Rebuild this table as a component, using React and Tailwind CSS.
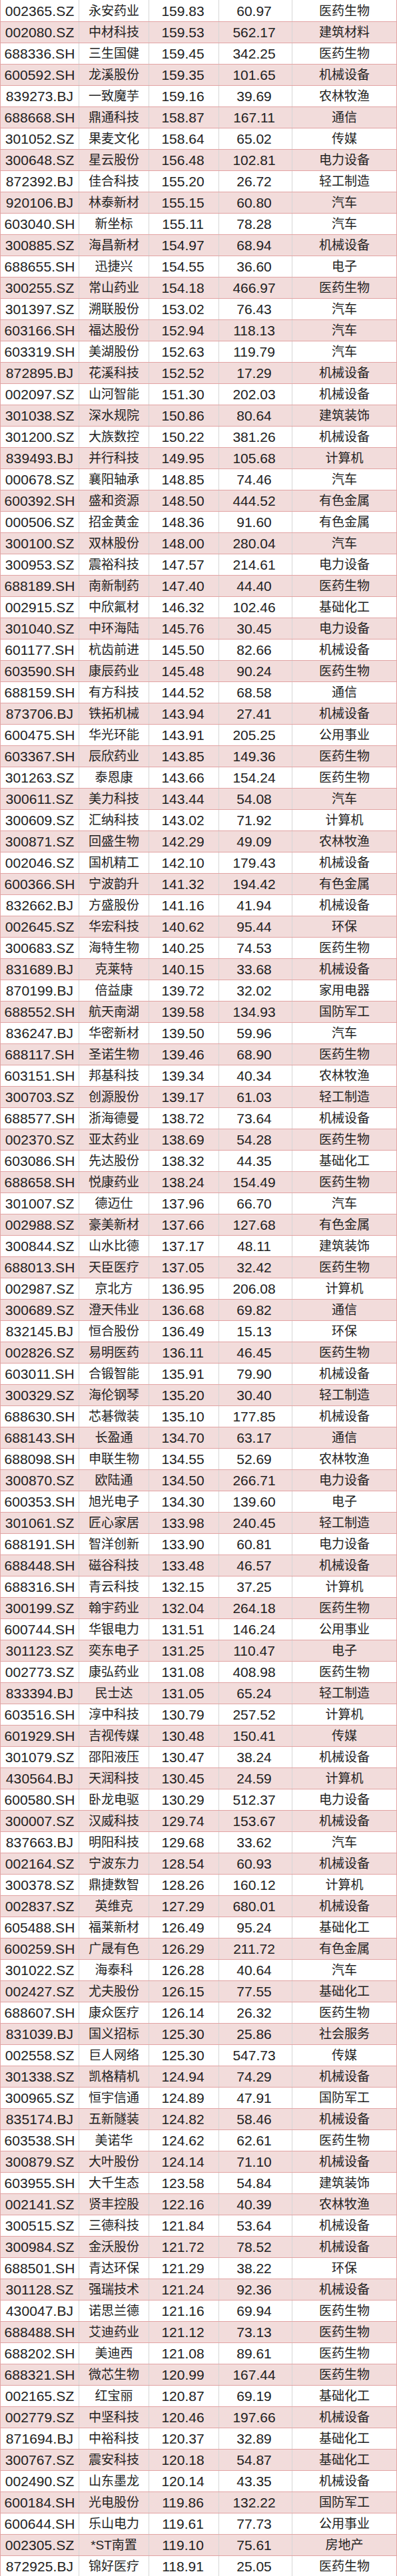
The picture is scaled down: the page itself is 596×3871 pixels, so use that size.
import React from "react";

const RAW = `002365.SZ|永安药业|159.83|60.97|医药生物
002080.SZ|中材科技|159.53|562.17|建筑材料
688336.SH|三生国健|159.45|342.25|医药生物
600592.SH|龙溪股份|159.35|101.65|机械设备
839273.BJ|一致魔芋|159.16|39.69|农林牧渔
688668.SH|鼎通科技|158.87|167.11|通信
301052.SZ|果麦文化|158.64|65.02|传媒
300648.SZ|星云股份|156.48|102.81|电力设备
872392.BJ|佳合科技|155.20|26.72|轻工制造
920106.BJ|林泰新材|155.15|60.80|汽车
603040.SH|新坐标|155.11|78.28|汽车
300885.SZ|海昌新材|154.97|68.94|机械设备
688655.SH|迅捷兴|154.55|36.60|电子
300255.SZ|常山药业|154.18|466.97|医药生物
301397.SZ|溯联股份|153.02|76.43|汽车
603166.SH|福达股份|152.94|118.13|汽车
603319.SH|美湖股份|152.63|119.79|汽车
872895.BJ|花溪科技|152.52|17.29|机械设备
002097.SZ|山河智能|151.30|202.03|机械设备
301038.SZ|深水规院|150.86|80.64|建筑装饰
301200.SZ|大族数控|150.22|381.26|机械设备
839493.BJ|并行科技|149.95|105.68|计算机
000678.SZ|襄阳轴承|148.85|74.46|汽车
600392.SH|盛和资源|148.50|444.52|有色金属
000506.SZ|招金黄金|148.36|91.60|有色金属
300100.SZ|双林股份|148.00|280.04|汽车
300953.SZ|震裕科技|147.57|214.61|电力设备
688189.SH|南新制药|147.40|44.40|医药生物
002915.SZ|中欣氟材|146.32|102.46|基础化工
301040.SZ|中环海陆|145.76|30.45|电力设备
601177.SH|杭齿前进|145.50|82.66|机械设备
603590.SH|康辰药业|145.48|90.24|医药生物
688159.SH|有方科技|144.52|68.58|通信
873706.BJ|铁拓机械|143.94|27.41|机械设备
600475.SH|华光环能|143.91|205.25|公用事业
603367.SH|辰欣药业|143.85|149.36|医药生物
301263.SZ|泰恩康|143.66|154.24|医药生物
300611.SZ|美力科技|143.44|54.08|汽车
300609.SZ|汇纳科技|143.02|71.92|计算机
300871.SZ|回盛生物|142.29|49.09|农林牧渔
002046.SZ|国机精工|142.10|179.43|机械设备
600366.SH|宁波韵升|141.32|194.42|有色金属
832662.BJ|方盛股份|141.16|41.94|机械设备
002645.SZ|华宏科技|140.62|95.44|环保
300683.SZ|海特生物|140.25|74.53|医药生物
831689.BJ|克莱特|140.15|33.68|机械设备
870199.BJ|倍益康|139.72|32.02|家用电器
688552.SH|航天南湖|139.58|134.93|国防军工
836247.BJ|华密新材|139.50|59.96|汽车
688117.SH|圣诺生物|139.46|68.90|医药生物
603151.SH|邦基科技|139.34|40.34|农林牧渔
300703.SZ|创源股份|139.17|61.03|轻工制造
688577.SH|浙海德曼|138.72|73.64|机械设备
002370.SZ|亚太药业|138.69|54.28|医药生物
603086.SH|先达股份|138.32|44.35|基础化工
688658.SH|悦康药业|138.24|154.49|医药生物
301007.SZ|德迈仕|137.96|66.70|汽车
002988.SZ|豪美新材|137.66|127.68|有色金属
300844.SZ|山水比德|137.17|48.11|建筑装饰
688013.SH|天臣医疗|137.05|32.42|医药生物
002987.SZ|京北方|136.95|206.08|计算机
300689.SZ|澄天伟业|136.68|69.82|通信
832145.BJ|恒合股份|136.49|15.13|环保
002826.SZ|易明医药|136.11|46.45|医药生物
603011.SH|合锻智能|135.91|79.90|机械设备
300329.SZ|海伦钢琴|135.20|30.40|轻工制造
688630.SH|芯碁微装|135.10|177.85|机械设备
688143.SH|长盈通|134.70|63.17|通信
688098.SH|申联生物|134.55|52.69|农林牧渔
300870.SZ|欧陆通|134.50|266.71|电力设备
600353.SH|旭光电子|134.30|139.60|电子
301061.SZ|匠心家居|133.98|240.45|轻工制造
688191.SH|智洋创新|133.90|60.81|电力设备
688448.SH|磁谷科技|133.48|46.57|机械设备
688316.SH|青云科技|132.15|37.25|计算机
300199.SZ|翰宇药业|132.04|264.18|医药生物
600744.SH|华银电力|131.51|146.24|公用事业
301123.SZ|奕东电子|131.25|110.47|电子
002773.SZ|康弘药业|131.08|408.98|医药生物
833394.BJ|民士达|131.05|65.24|轻工制造
603516.SH|淳中科技|130.79|257.52|计算机
601929.SH|吉视传媒|130.48|150.41|传媒
301079.SZ|邵阳液压|130.47|38.24|机械设备
430564.BJ|天润科技|130.45|24.59|计算机
600580.SH|卧龙电驱|130.29|512.37|电力设备
300007.SZ|汉威科技|129.74|153.67|机械设备
837663.BJ|明阳科技|129.68|33.62|汽车
002164.SZ|宁波东力|128.54|60.93|机械设备
300378.SZ|鼎捷数智|128.26|160.12|计算机
002837.SZ|英维克|127.29|680.01|机械设备
605488.SH|福莱新材|126.49|95.24|基础化工
600259.SH|广晟有色|126.29|211.72|有色金属
301022.SZ|海泰科|126.28|40.64|汽车
002427.SZ|尤夫股份|126.15|77.55|基础化工
688607.SH|康众医疗|126.14|26.32|医药生物
831039.BJ|国义招标|125.30|25.86|社会服务
002558.SZ|巨人网络|125.30|547.73|传媒
301338.SZ|凯格精机|124.94|74.29|机械设备
300965.SZ|恒宇信通|124.89|47.91|国防军工
835174.BJ|五新隧装|124.82|58.46|机械设备
603538.SH|美诺华|124.62|62.61|医药生物
300879.SZ|大叶股份|124.14|71.10|机械设备
603955.SH|大千生态|123.58|54.84|建筑装饰
002141.SZ|贤丰控股|122.16|40.39|农林牧渔
300515.SZ|三德科技|121.84|53.64|机械设备
300984.SZ|金沃股份|121.72|78.52|机械设备
688501.SH|青达环保|121.29|38.22|环保
301128.SZ|强瑞技术|121.24|92.36|机械设备
430047.BJ|诺思兰德|121.16|69.94|医药生物
688488.SH|艾迪药业|121.12|73.13|医药生物
688202.SH|美迪西|121.08|89.61|医药生物
688321.SH|微芯生物|120.99|167.44|医药生物
002165.SZ|红宝丽|120.87|69.19|基础化工
002779.SZ|中坚科技|120.46|197.66|机械设备
871694.BJ|中裕科技|120.37|32.89|基础化工
300767.SZ|震安科技|120.18|54.87|基础化工
002490.SZ|山东墨龙|120.14|43.35|机械设备
600184.SH|光电股份|119.86|132.22|国防军工
600644.SH|乐山电力|119.61|77.73|公用事业
002305.SZ|*ST南置|119.10|75.61|房地产
872925.BJ|锦好医疗|118.91|25.05|医药生物`;

const ROWS = RAW.split("\n").map((l) => l.split("|"));

const latin = { fontFamily: '"Liberation Sans", "Noto Sans CJK SC", sans-serif' };

function Row({ r, i }) {
  const pink = i % 2 === 1;
  return (
    <div
      className={
        "flex h-[32px] w-full text-[#222222] " +
        (i === 0 ? "" : "border-t border-[#e2a3a3] ") +
        (pink ? "bg-[#f2dcdb]" : "bg-white")
      }
    >
      <div className="flex w-[119px] shrink-0 items-center justify-center border-l border-r border-l-[#e2a3a3] border-r-[#d6d6d6] text-[21px] tracking-[0.1px]">
        {r[0]}
      </div>
      <div className="flex w-[105px] shrink-0 items-center justify-center border-r border-[#d6d6d6] text-[19px] [font-family:'Liberation_Sans','Noto_Sans_CJK_SC',sans-serif]">
        {r[1]}
      </div>
      <div className="flex w-[105px] shrink-0 items-center justify-center border-r border-[#d6d6d6] pr-[3px] text-[21px]">
        {r[2]}
      </div>
      <div className="flex w-[110px] shrink-0 items-center justify-center border-r border-[#d6d6d6] pr-[4px] text-[21px]">
        {r[3]}
      </div>
      <div className="flex w-[157px] shrink-0 items-center justify-center border-r border-[#e2a3a3] text-[19px]">
        {r[4]}
      </div>
    </div>
  );
}

export default function App() {
  return (
    <div className="w-[596px] bg-white leading-none" style={latin}>
      {ROWS.map((r, i) => (
        <Row key={i} r={r} i={i} />
      ))}
    </div>
  );
}
